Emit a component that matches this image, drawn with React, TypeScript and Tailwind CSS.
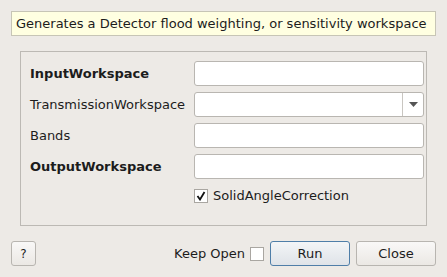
import React from "react";

const font = { fontFamily: '"DejaVu Sans", sans-serif' };

function Field({ label, bold, combo }: { label: string; bold?: boolean; combo?: boolean }) {
  return (
    <div className="flex items-center h-[25px]">
      <div className={`w-[164px] text-[13px] text-[#1c1c1c] ${bold ? "font-bold" : ""}`}>{label}</div>
      <div className="relative w-[230px] h-[25px] bg-white border border-[#b9b6b1] rounded-[3px] flex">
        {combo && (
          <div className="ml-auto w-[21px] h-full border-l border-[#c9c6c1] flex items-center justify-center">
            <svg width="9" height="5" viewBox="0 0 9 5">
              <path d="M0 0 L9 0 L4.5 5 Z" fill="#555" />
            </svg>
          </div>
        )}
      </div>
    </div>
  );
}

export default function App() {
  return (
    <div className="w-[447px] h-[277px] bg-[#edeae6] overflow-hidden" style={font}>
      <div className="pt-[11px] pl-[11px]">
        <div className="w-[425px] h-[25px] bg-[#ffffe1] border border-[#c7c5b6] flex items-center pl-[4px] text-[13px] text-[#1c1c1c] whitespace-nowrap">
          Generates a Detector flood weighting, or sensitivity workspace
        </div>
      </div>
      <div className="mt-[15px] ml-[20px] w-[407px] h-[175px] border border-[#bcb9b4] flex flex-col pt-[9px] pl-[9px]">
        <div className="flex flex-col gap-[6px]">
          <Field label="InputWorkspace" bold />
          <Field label="TransmissionWorkspace" combo />
          <Field label="Bands" />
          <Field label="OutputWorkspace" bold />
        </div>
        <div className="flex items-center ml-[164px] mt-[10px] h-[14px]">
          <div className="w-[14px] h-[14px] bg-white border border-[#a9a6a1] flex items-center justify-center">
            <svg width="10" height="10" viewBox="0 0 10 10">
              <path d="M1.5 5 L4 8.5 L8.5 1" stroke="#111" strokeWidth="1.8" fill="none" />
            </svg>
          </div>
          <span className="ml-[5px] text-[13px] text-[#1c1c1c]">SolidAngleCorrection</span>
        </div>
      </div>
      <div className="mt-[15px] flex items-center h-[25px] pl-[11px] pr-[11px]">
        <div className="w-[25px] h-[25px] border border-[#b8b5b0] rounded-[3px] bg-gradient-to-b from-[#f9f8f7] to-[#ebe8e4] flex items-center justify-center text-[12px] text-[#1c1c1c]">
          ?
        </div>
        <span className="ml-auto text-[13px] text-[#1c1c1c]">Keep Open</span>
        <div className="ml-[5px] w-[14px] h-[14px] bg-white border border-[#a9a6a1]" />
        <div className="ml-[6px] w-[80px] h-[25px] border border-[#4f7ea8] rounded-[3px] bg-gradient-to-b from-[#f3f5f7] to-[#dfe3e8] flex items-center justify-center text-[13px] text-[#1c1c1c]">
          Run
        </div>
        <div className="ml-[6px] w-[80px] h-[25px] border border-[#b8b5b0] rounded-[3px] bg-gradient-to-b from-[#f9f8f7] to-[#ebe8e4] flex items-center justify-center text-[13px] text-[#1c1c1c]">
          Close
        </div>
      </div>
    </div>
  );
}
